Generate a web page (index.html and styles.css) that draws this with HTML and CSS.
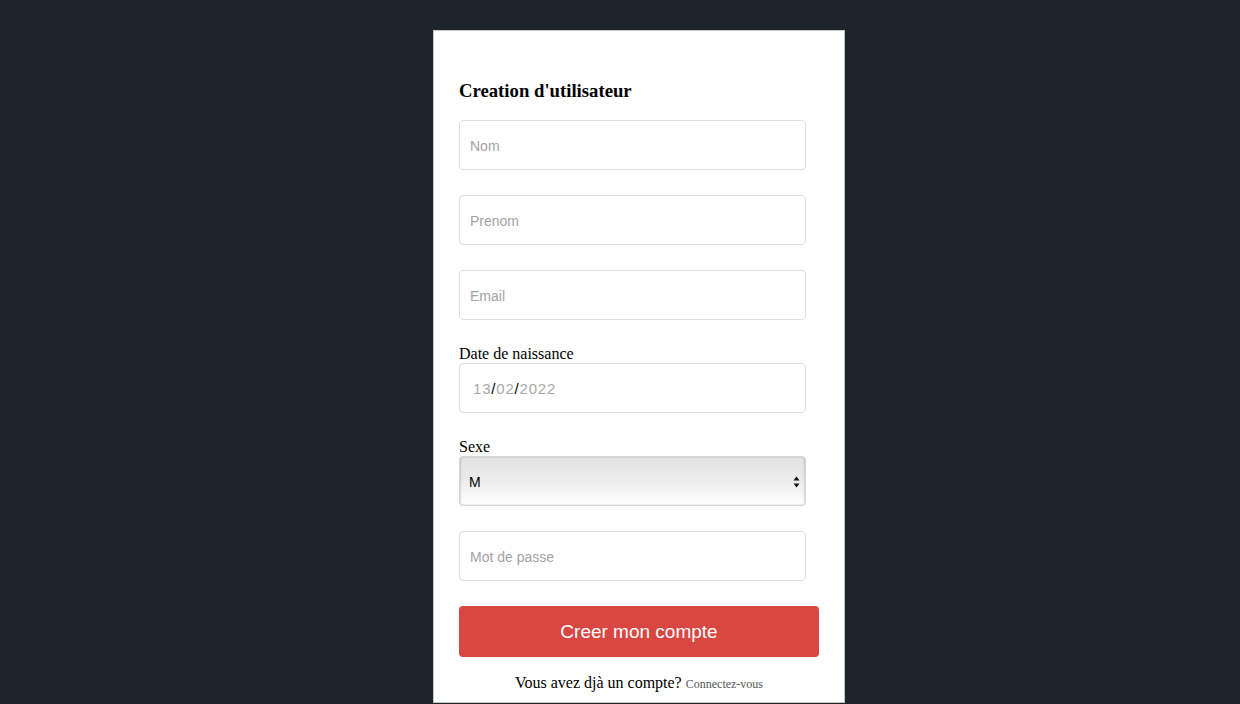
FILE: index.html
```html
<!DOCTYPE html>
<html>
<head>
    <title>Creation d'utilisateur</title>
    <meta charset="UTF-8">
    <meta name="viewport" content="width=device-width, initial-scale=1.0">
    <link rel="stylesheet" href="styles.css">
</head>
<body>
    <div class="page">
        <div class="card">
            <h3>Creation d'utilisateur</h3>
            <form class="form" onsubmit="return false;">
                <input class="field" type="text" placeholder="Nom">
                <input class="field" type="text" placeholder="Prenom">
                <input class="field" type="email" placeholder="Email">

                <label class="label">Date de naissance</label>
                <div class="field date-field">
                    <span class="dim">13</span>/<span class="dim">02</span>/<span class="dim">2022</span>
                </div>

                <label class="label label-sexe">Sexe</label>
                <div class="select-wrap">
                    <select class="select">
                        <option>M</option>
                        <option>F</option>
                    </select>
                    <svg class="select-arrows" width="7" height="12" viewBox="0 0 7 12">
                        <path d="M3.5 0.5 L6.5 4.5 L0.5 4.5 Z" fill="#111"/>
                        <path d="M3.5 11.5 L6.5 7.5 L0.5 7.5 Z" fill="#111"/>
                    </svg>
                </div>

                <input class="field field-pass" type="password" placeholder="Mot de passe">

                <button class="submit" type="submit">Creer mon compte</button>
            </form>
            <p class="footer">Vous avez djà un compte? <a class="login-link" href="#">Connectez-vous</a></p>
        </div>
    </div>
</body>
</html>
```

FILE: styles.css
```css
html, body {
    margin: 0;
    padding: 0;
    background: #1e242b;
    height: 100%;
    overflow: hidden;
}
.page {
    display: flex;
    justify-content: center;
    padding: 30px 0 0 38px;
}
.card {
    width: 360px;
    background: #fff;
    border: 1px solid #c8c8c8;
    padding: 49px 25px 9px 25px;
    font-family: "Liberation Serif", "Times New Roman", serif;
}
.card h3 {
    font-size: 18.72px;
    font-weight: bold;
    line-height: 21px;
    margin: 0 0 19px 0;
    color: #000;
}
.form { display: flex; flex-direction: column; }
.field {
    box-sizing: border-box;
    width: 347px;
    height: 50px;
    border: 1px solid #dcdcdc;
    border-radius: 4px;
    padding: 1px 10px 0 10px;
    margin: 0 0 25px 0;
    font-family: "Liberation Sans", Arial, sans-serif;
    font-size: 14px;
    color: #222;
    background: #fff;
    outline: none;
}
.field::placeholder { color: #a3a3a3; }
.label {
    font-size: 16px;
    line-height: 18px;
    color: #000;
}
.date-field {
    display: flex;
    align-items: center;
    padding-left: 13px;
    font-size: 15px;
    color: #000;
    letter-spacing: 0.8px;
}
.dim { color: #a8a8a8; }
.select-wrap {
    position: relative;
    width: 347px;
    margin-bottom: 25px;
}
.select {
    -webkit-appearance: none;
    appearance: none;
    box-sizing: border-box;
    width: 347px;
    height: 50px;
    border: 1px solid #d4d4d4;
    border-radius: 4px;
    padding: 1px 9px 0 9px;
    font-family: "Liberation Sans", Arial, sans-serif;
    font-size: 14px;
    color: #000;
    background: linear-gradient(#e2e2e2 0%, #ebebeb 45%, #ffffff 100%);
    box-shadow: inset 1px 0 2px rgba(0,0,0,0.12), inset -1px 0 2px rgba(0,0,0,0.12);
    outline: none;
}
.select-arrows {
    position: absolute;
    right: 6px;
    top: 20px;
    pointer-events: none;
}
.submit {
    width: 360px;
    height: 51px;
    border: none;
    border-radius: 4px;
    background: #d84742;
    color: #fff;
    font-family: "Liberation Sans", Arial, sans-serif;
    font-size: 19px;
    padding-top: 2px;
    cursor: pointer;
}
.footer {
    margin: 17px 0 0 0;
    text-align: center;
    font-size: 16px;
    line-height: 18px;
    color: #000;
}
.login-link {
    font-size: 12px;
    color: #555;
    text-decoration: none;
}
```
